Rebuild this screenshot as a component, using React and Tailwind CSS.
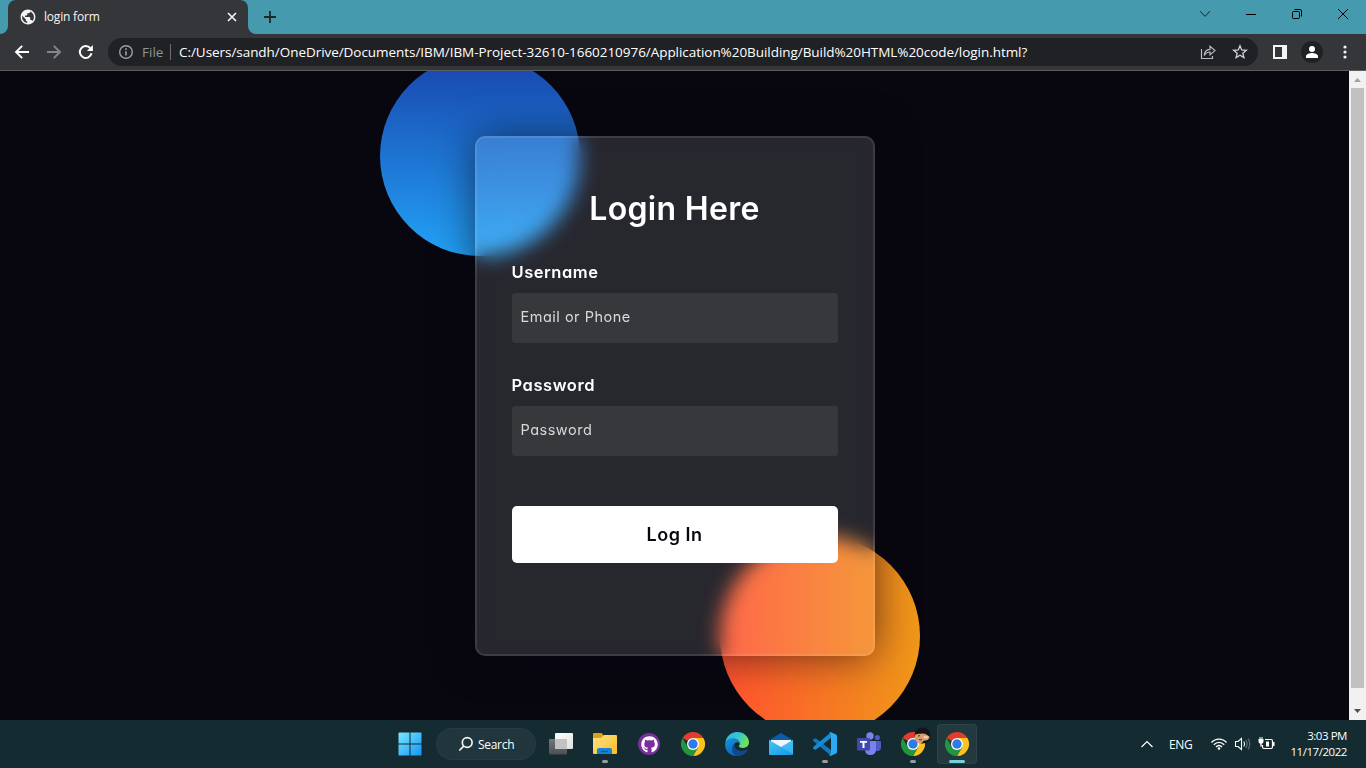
import React from "react";
import { FaGithub } from "react-icons/fa";

const UI = "font-['Open_Sans','Noto_Sans',sans-serif]";
const POP = "font-['Inter',sans-serif] [font-feature-settings:'cv11']";

function ChromeLogo() {
  return (
    <svg width="24" height="24" viewBox="0 0 24 24" className="block shrink-0">
      <path d="M12 12 1.600 6A12 12 0 0 1 22.400 6Z" fill="#e33b2e" />
      <path d="M12 6H22.400A12 12 0 0 1 12 24L17.200 15Z" fill="#fcc31e" />
      <path d="M1.600 6A12 12 0 0 0 12 24L17.200 15 12 12 6.800 15Z" fill="#22963f" />
      <circle cx="12" cy="12" r="6" fill="#fff" />
      <circle cx="12" cy="12" r="4.700" fill="#2d7bea" />
    </svg>
  );
}

function TaskItem({ children, mark, active }) {
  return (
    <div className={"relative flex h-10 w-10 shrink-0 items-center justify-center rounded " + (active ? "bg-[#24393e] ring-1 ring-inset ring-[#2e4247]" : "")}>
      {children}
      {mark && <span className="absolute bottom-[1px] h-[3px] w-[6px] rounded-full bg-[#959fa2]" />}
      {active && <span className="absolute bottom-[1px] h-[3px] w-4 rounded-full bg-[#73d2dd]" />}
    </div>
  );
}

function TitleBar() {
  return (
    <div className="flex h-[34px] items-stretch bg-[#459aad]">
      <svg width="8" height="34" className="shrink-0"><path d="M8 26V34H0A8 8 0 0 0 8 26Z" fill="#35363a" /></svg>
      <div className="flex w-[240px] shrink-0 items-center rounded-t-lg bg-[#35363a] pl-[12px] pr-[10px]">
        <svg width="16" height="16" viewBox="1.200 1.200 21.600 21.600">
          <circle cx="12" cy="12" r="9.500" fill="#35363a" />
          <path fill="#f1f3f4" d="M12 2C6.480 2 2 6.480 2 12s4.480 10 10 10 10-4.480 10-10S17.520 2 12 2zm-1 17.930c-3.950-.490-7-3.850-7-7.930 0-.620.080-1.210.210-1.790L9 15v1c0 1.100.900 2 2 2v1.930zm6.900-2.540c-.260-.810-1-1.390-1.900-1.390h-1v-3c0-.550-.450-1-1-1H8v-2h2c.550 0 1-.450 1-1V7h2c1.100 0 2-.900 2-2v-.410c2.930 1.190 5 4.060 5 7.410 0 2.080-.800 3.970-2.100 5.390z" />
        </svg>
        <span className="ml-2 flex-1 text-[12px] leading-4 tracking-[-0.200px] text-[#f4f5f6]">login form</span>
        <svg width="12" height="12" viewBox="0 0 12 12"><path d="M2 2l8 8M10 2l-8 8" stroke="#f1f3f4" strokeWidth="1.7" /></svg>
      </div>
      <svg width="8" height="34" className="shrink-0"><path d="M0 26V34H8A8 8 0 0 1 0 26Z" fill="#35363a" /></svg>
      <div className="ml-[7px] flex items-center">
        <svg width="14" height="14" viewBox="0 0 14 14"><path d="M7 1v12M1 7h12" stroke="#20262a" strokeWidth="1.8" /></svg>
      </div>
      <div className="ml-auto flex gap-[34px] pr-[17px] pt-[8px]">
        <svg width="12" height="12" viewBox="0 0 12 12"><path d="M1 3.200 6 8.400 11 3.200" fill="none" stroke="#10242a" strokeWidth="1" /></svg>
        <svg width="12" height="12" viewBox="0 0 12 12"><path d="M1 6.500H11" stroke="#000" strokeWidth="1" /></svg>
        <svg width="12" height="12" viewBox="0 0 12 12" fill="none" stroke="#000" strokeWidth="1"><rect x="1.500" y="3.500" width="7" height="7" rx="1" /><path d="M3.500 1.500H9a1.500 1.500 0 0 1 1.500 1.500V8.500" /></svg>
        <svg width="12" height="12" viewBox="0 0 12 12"><path d="M1 1l10 10M11 1 1 11" stroke="#000" strokeWidth="1" /></svg>
      </div>
    </div>
  );
}

function Toolbar() {
  return (
    <div className="flex h-[37px] items-center border-b border-[#5c5d60] bg-[#35363a] pl-[14px] pr-[14px]">
      <svg width="16" height="16" viewBox="0 0 16 16" fill="none" stroke="#fff" strokeWidth="1.900"><path d="M15 8H2M8.200 1.800 2 8l6.200 6.200" /></svg>
      <svg width="16" height="16" viewBox="0 0 16 16" className="ml-[16px]" fill="none" stroke="#85868a" strokeWidth="1.900"><path d="M1 8H14M7.800 1.800 14 8l-6.200 6.200" /></svg>
      <svg width="16" height="16" viewBox="0 0 16 16" className="ml-[16px]"><path d="M13.500 9.300A5.900 5.900 0 1 1 12.300 4.200" fill="none" stroke="#fff" strokeWidth="2" /><path d="M14.900 1V7H8.900Z" fill="#fff" /></svg>
      <div className="ml-[14px] flex h-7 w-[1150px] items-center rounded-full bg-[#202124] pl-[10px] pr-[10px]">
        <svg width="16" height="16" viewBox="0 0 16 16" fill="none" stroke="#9aa0a6" strokeWidth="1.400"><circle cx="8" cy="8" r="6.300" /><path d="M8 7.200V11.500M8 4.300V5.900" strokeWidth="1.600" /></svg>
        <span className="ml-2 w-[21px] whitespace-nowrap text-[13.500px] leading-5 text-[#8f9499]">File</span>
        <span className="ml-[7px] h-4 w-px bg-[#6c6e72]" />
        <span className="ml-[8px] whitespace-nowrap text-[13.500px] leading-5 tracking-[-0.050px] text-white">C:/Users/sandh/OneDrive/Documents/IBM/IBM-Project-32610-1660210976/Application%20Building/Build%20HTML%20code/login.html?</span>
        <div className="ml-auto flex shrink-0 gap-4">
          <svg width="16" height="16" viewBox="0 0 16 16" fill="none" stroke="#b9bbbe" strokeWidth="1.200"><path d="M1.500 5V14.500H12.500V12M4.300 11.500C4.500 7.500 6.500 5.500 10 5.300V2.300L15 6.600 10 10.800V8C7.500 8 5.800 9 4.300 11.500Z" /></svg>
          <svg width="16" height="16" viewBox="0 0 16 16" fill="none" stroke="#d0d2d5" strokeWidth="1.300"><path d="M8 1.800 9.700 6 14.300 6.300 10.800 9.200 11.900 13.600 8 11.200 4.100 13.600 5.200 9.200 1.700 6.300 6.300 6Z" /></svg>
        </div>
      </div>
      <svg width="14" height="14" viewBox="0 0 14 14" className="ml-[15px]"><path d="M0 0H14V14H0ZM2 2V12H9V2Z" fill="#f5f5f5" fillRule="evenodd" /></svg>
      <svg width="22" height="22" viewBox="0 0 22 22" className="ml-[14px]"><circle cx="11" cy="11" r="11" fill="#202124" /><circle cx="11" cy="8" r="3" fill="#fff" /><path d="M5 17V15c0-2 4-3 6-3s6 1 6 3v2Z" fill="#fff" /></svg>
      <svg width="4" height="14" viewBox="0 0 4 14" className="ml-auto mr-[5px]" fill="#f1f3f4"><circle cx="2" cy="2" r="1.600" /><circle cx="2" cy="7" r="1.600" /><circle cx="2" cy="12" r="1.600" /></svg>
    </div>
  );
}

function Field({ label, placeholder, type }) {
  return (
    <div className="mt-[30px]">
      <label className="block h-[25px] text-[16.500px] font-semibold leading-[25px] tracking-[0.550px] text-white">{label}</label>
      <input type={type} placeholder={placeholder} className="mt-2 block h-[50px] w-full rounded-[3px] bg-[#37383c] px-[9px] pb-[3px] text-[14.500px] tracking-[0.500px] outline-none placeholder:text-[#d9d9da]" />
    </div>
  );
}

function LoginPage() {
  return (
    <div className="relative flex min-w-0 flex-1 items-start justify-center overflow-hidden bg-[#080710] pt-[65px]">
      <div className="absolute left-1/2 top-[65px] h-[520px] w-[430px] -translate-x-1/2">
        <div className="absolute -left-20 -top-20 h-[200px] w-[200px] rounded-full bg-[linear-gradient(#1845ad,#23a2f6)]" />
        <div className="absolute -bottom-20 -right-[30px] h-[200px] w-[200px] rounded-full bg-[linear-gradient(to_right,#ff512f,#f09819)]" />
      </div>
      <form className={"relative h-[520px] w-[400px] rounded-[10px] border-2 border-white/10 bg-white/[0.13] px-[35px] py-[50px] shadow-[0_0_40px_rgba(8,7,16,0.6)] backdrop-blur-[10px] " + POP}>
        <h3 className="text-center text-[32px] font-semibold leading-[42px] tracking-[0.300px] text-white">Login Here</h3>
        <Field label="Username" placeholder="Email or Phone" type="text" />
        <Field label="Password" placeholder="Password" type="password" />
        <button type="button" className="mt-[50px] block h-[57px] w-full rounded-[5px] bg-white text-[18px] font-semibold tracking-[0.500px] text-[#080710]">Log In</button>
      </form>
    </div>
  );
}

function Scrollbar() {
  return (
    <div className="flex w-[17px] shrink-0 flex-col items-center bg-[#f1f1f1]">
      <svg width="17" height="17"><path d="M5 11 8.500 7 12 11Z" fill="#a3a3a3" /></svg>
      <div className="h-[600px] w-[13px] bg-[#c1c1c1]" />
      <svg width="17" height="17" className="mt-auto"><path d="M5 6 8.500 10 12 6Z" fill="#505050" /></svg>
    </div>
  );
}

function Taskbar() {
  return (
    <div className="flex h-12 items-center bg-[#132b31] pl-[390px] pr-[19px]">
      <TaskItem>
        <svg width="24" height="24" viewBox="0 0 24 24">
          <defs><linearGradient id="win" x1="0" y1="0" x2="24" y2="24" gradientUnits="userSpaceOnUse"><stop stopColor="#7ceaff" /><stop offset="1" stopColor="#1093f5" /></linearGradient></defs>
          <path d="M1 .5H11.500V11.500H.5V1ZM12.500.5H23L23.500 1V11.500H12.500ZM.5 12.500H11.500V23.500H1L.5 23ZM12.500 12.500H23.500V23L23 23.500H12.500Z" fill="url(#win)" />
        </svg>
      </TaskItem>
      <div className="ml-[6px] flex h-8 w-[100px] items-center rounded-full bg-[#20363c] pl-[22px] ring-1 ring-inset ring-[#263c41]">
        <svg width="16" height="16" viewBox="0 0 16 16" fill="none" stroke="#f4f6f6" strokeWidth="1.700"><circle cx="9.200" cy="6.500" r="4.900" /><path d="M5.700 10.100 1.300 14.500" /></svg>
        <span className="ml-[4px] pt-[2px] text-[12px] leading-4 tracking-[-0.300px] text-white">Search</span>
      </div>
      <div className="ml-[5px] flex items-center gap-1">
        <TaskItem>
          <svg width="24" height="24" viewBox="0 0 24 24">
            <defs><linearGradient id="tv" x2="0" y2="1"><stop stopColor="#747678" /><stop offset="1" stopColor="#4c4e50" /></linearGradient><linearGradient id="tvw" x2="1" y2="1"><stop stopColor="#fff" /><stop offset="1" stopColor="#dedfe0" /></linearGradient></defs>
            <rect x="0" y="7" width="18" height="15.500" rx="1" fill="url(#tv)" /><rect x="6" y="1" width="18" height="16" rx="1" fill="url(#tvw)" /><path d="M6 7H18V17H7L6 16Z" fill="#c0c2c3" />
          </svg>
        </TaskItem>
        <TaskItem mark>
          <svg width="26" height="24" viewBox="0 0 26 24">
            <defs><linearGradient id="fo" x2="1" y2="1"><stop stopColor="#ffe18a" /><stop offset="1" stopColor="#f9bd24" /></linearGradient></defs>
            <path d="M1 2Q1 1 2 1H9Q10 1 10.500 2L12 4V8H1Z" fill="#dca012" /><path d="M1 6H9L12 3H24Q25 3 25 4V21Q25 22 24 22H2Q1 22 1 21Z" fill="url(#fo)" /><path d="M5 22V18Q5 16 7 16H18Q20 16 20 18V22Z" fill="#1583d5" /><path d="M9 19.500H16" stroke="#0b569c" strokeWidth="1.200" />
          </svg>
        </TaskItem>
        <TaskItem>
          <span className="flex h-[22px] w-[22px] items-center justify-center rounded-full bg-[#7d2e9e]"><FaGithub className="h-[17px] w-[17px] text-white" /></span>
        </TaskItem>
        <TaskItem><ChromeLogo /></TaskItem>
        <TaskItem>
          <svg width="24" height="24" viewBox="0 0 24 24">
            <defs>
              <linearGradient id="e1" x1="0" y1="0" x2="1" y2=".4"><stop stopColor="#2fb5e8" /><stop offset=".55" stopColor="#36c6cf" /><stop offset="1" stopColor="#6de35a" /></linearGradient>
              <linearGradient id="e2" x2=".5" y2="1"><stop stopColor="#1794de" /><stop offset="1" stopColor="#0d67bd" /></linearGradient>
            </defs>
            <path d="M.4 10.500C1.200 4.500 6 0 12.200 0 19 0 24 5 24 10.300c0 3.500-2.600 5.700-6 5.700-3.200 0-4.400-1.200-4.200-2 .8-.9 1-1.400 1-2.400 0-2.300-2.400-4.600-6.300-4.600-3.700 0-6.600 1.500-8.100 3.500Z" fill="url(#e1)" />
            <path d="M.1 12.500C.2 8.700 4 6.300 8.200 6.300c4.200 0 6.500 2.600 6.600 5.100C13.500 9.800 11 10 9.500 11.700 6.400 15.300 8.500 21.500 14 23.700 6 25.200 0 19.500.1 12.500Z" fill="url(#e2)" />
            <path d="M9.500 11.700C5.500 15 6.500 23 12.500 24c4.200.1 8-2.200 10-5.600.3-.5-.2-.8-.7-.6C16.500 20.200 8.300 18 9.500 11.700Z" fill="#114a8c" />
          </svg>
        </TaskItem>
        <TaskItem>
          <svg width="24" height="24" viewBox="0 0 24 24">
            <defs><linearGradient id="ml" x2="1" y2="1"><stop stopColor="#43c8f8" /><stop offset="1" stopColor="#1794e5" /></linearGradient></defs>
            <path d="M0 8 12 1 24 8V12H0Z" fill="#0a5ba9" /><path d="M2 8H22V12L12 16 2 12Z" fill="#f2f5f8" /><path d="M0 8 12 15 24 8V22Q24 23 23 23H1Q0 23 0 22Z" fill="url(#ml)" /><path d="M12 15 24 8V22Z" fill="#5ad3fb" opacity=".45" />
          </svg>
        </TaskItem>
        <TaskItem mark>
          <svg width="24" height="24" viewBox="0 0 24 24">
            <path d="M0 7.500 2 6.200Q2.500 6 3 6.400L18 18V23.800L.3 9Q-.3 8.200 0 7.500Z" fill="#1178bd" />
            <path d="M0 16.500 2 17.800Q2.500 18 3 17.600L18 6V.2L.3 15Q-.3 15.800 0 16.500Z" fill="#168bd2" />
            <path d="M17.500 0 23 2.400Q24 3 24 4V20Q24 21 23 21.600L17.500 24Q16.500 24 16.500 23L18 21V3L16.500 1Q16.500 0 17.500 0Z" fill="#2baaf2" />
          </svg>
        </TaskItem>
        <TaskItem>
          <svg width="24" height="24" viewBox="0 0 24 24">
            <circle cx="20.300" cy="5.500" r="2.600" fill="#5059c9" /><circle cx="13" cy="4" r="3.700" fill="#7b83eb" />
            <path d="M17 9H23Q24 9 24 10V15Q24 19 20.500 19H17Z" fill="#5059c9" /><path d="M8 9H18Q19 9 19 10V17Q19 23 13.500 23 8 23 8 17Z" fill="#7b83eb" />
            <rect x="0" y="6" width="13" height="12.500" rx="1" fill="#4149aa" /><path d="M3 9H10V10.800H7.500V16H5.500V10.800H3Z" fill="#fff" />
          </svg>
        </TaskItem>
        <TaskItem mark>
          <ChromeLogo />
          <svg width="17" height="17" viewBox="0 0 17 17" className="absolute right-[2px] top-[3px]">
            <circle cx="8.500" cy="8.500" r="8" fill="#151416" />
            <path d="M1 8C4 6 6 7 8 6.500 11 6 13 8 15.500 9.500 15.500 13 12 14 10 13.500 8 16.500 5 17 3 15.500 1 13 0 10 1 8Z" fill="#d7a06e" />
            <path d="M4 9 6 8.700M5 12.500 8 13" stroke="#5a3d2a" strokeWidth="1.200" /><path d="M9.500 10 14 10.500" stroke="#f0d2ac" strokeWidth="2" />
          </svg>
        </TaskItem>
        <TaskItem active><ChromeLogo /></TaskItem>
      </div>
      <div className="ml-auto flex items-center text-white">
        <svg width="14" height="10" viewBox="0 0 14 10" fill="none" stroke="#fff" strokeWidth="1.200"><path d="M1.500 8 7 2.500 12.500 8" /></svg>
        <span className="ml-[15px] w-[24px] pt-[2px] text-[12px] leading-4 tracking-[-0.300px]">ENG</span>
        <svg width="18" height="14" viewBox="0 0 18 14" className="ml-[17px]" fill="none" stroke="#fff" strokeWidth="1.300"><path d="M1.500 5.500C5.500 1 12.500 1 16.500 5.500M3.800 7.800C7 4.500 11 4.500 14.200 7.800M6 10C7.800 8 10.200 8 12 10" /><circle cx="9" cy="11.500" r="1.300" fill="#fff" stroke="none" /></svg>
        <svg width="18" height="16" viewBox="0 0 18 16" className="ml-[6px]" fill="none" stroke="#fff" strokeWidth="1.100"><path d="M1.500 5.500H4L7.500 2.500V13.500L4 10.500H1.500Z" /><path d="M9.800 5.500Q11.400 8 9.800 10.500" /><path d="M11.800 4Q14.500 8 11.800 12M14 2.500Q17.500 8 14 13.500" stroke="#60757a" /></svg>
        <svg width="18" height="14" viewBox="0 0 18 14" className="ml-[6px]"><path d="M7 2.500H13Q14.500 2.500 14.500 4V10Q14.500 11.500 13 11.500H6Q4.500 11.500 4.500 10V8" fill="none" stroke="#fff" strokeWidth="1.200" /><rect x="8" y="4.500" width="3" height="5" fill="#fff" /><path d="M15 5H16.500V9H15ZM1.500 0V2H.5V4.500Q.5 6.500 2.300 6.700V9.500H3.700V6.700Q5.500 6.500 5.500 4.500V2H4.500V0H3.500V2H2.500V0Z" fill="#fff" /></svg>
        <div className="ml-[11px] w-[60px] whitespace-nowrap text-right text-[11.500px] leading-4 tracking-[-0.450px]">
          <div>3:03 PM</div>
          <div>11/17/2022</div>
        </div>
      </div>
    </div>
  );
}

export default function App() {
  return (
    <div className={"flex h-[768px] w-[1366px] flex-col overflow-hidden " + UI}>
      <TitleBar />
      <Toolbar />
      <div className="flex min-h-0 flex-1">
        <LoginPage />
        <Scrollbar />
      </div>
      <Taskbar />
    </div>
  );
}
